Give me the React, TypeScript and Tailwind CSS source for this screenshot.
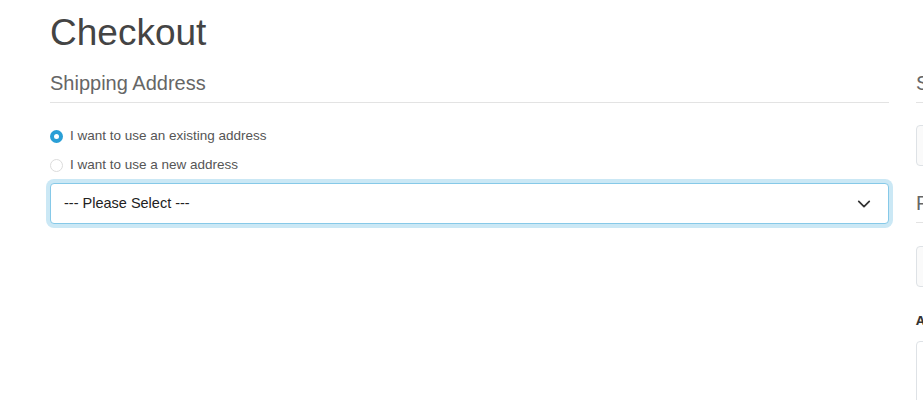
import React from 'react';

const sans = "font-['Liberation_Sans',Arial,sans-serif]";

const Radio: React.FC<{ checked?: boolean; label: string }> = ({ checked, label }) => (
  <label className="flex items-center h-[29px] gap-[7px] text-[13.5px] text-[#555]">
    {checked ? (
      <span className="w-[13px] h-[13px] rounded-full bg-[#2a9fd6] flex items-center justify-center">
        <span className="w-[5px] h-[5px] rounded-full bg-white" />
      </span>
    ) : (
      <span className="w-[13px] h-[13px] rounded-full border border-[#dcdcdc] bg-white" />
    )}
    <span>{label}</span>
  </label>
);

export default function App() {
  return (
    <div className={`w-[923px] h-[400px] overflow-hidden bg-white ${sans}`}>
      <div className="flex pl-[50px] gap-[27px]">
        {/* left column */}
        <div className="w-[839px] shrink-0">
          <h1 className="mt-[12px] text-[37px] leading-[42px] text-[#444]">Checkout</h1>
          <h3 className="mt-[18px] pb-[8px] text-[20px] leading-[22px] text-[#666] border-b border-[#e3e3e3]">
            Shipping Address
          </h3>
          <div className="mt-[19px]">
            <Radio checked label="I want to use an existing address" />
            <Radio label="I want to use a new address" />
          </div>
          <div className="mt-[3px] h-[41px] rounded-[4px] border border-[#86c9e8] ring-4 ring-[#cbe8f5] flex items-center justify-between pl-[13px] pr-[17px] bg-white">
            <span className="text-[14.5px] text-[#222]">--- Please Select ---</span>
            <svg width="14" height="14" viewBox="0 0 16 16" fill="none" stroke="#333" strokeWidth="2" strokeLinecap="round" strokeLinejoin="round">
              <path d="m2 5 6 6 6-6" />
            </svg>
          </div>
        </div>

        {/* right column */}
        <div className="w-[300px] shrink-0">
          <h3 className="mt-[72px] pb-[8px] text-[20px] leading-[22px] text-[#666] border-b border-[#e3e3e3] whitespace-nowrap">
            Shipping Method
          </h3>
          <div className="mt-[22px] h-[41px] rounded-[4px] border border-[#dee2e6] bg-[#fafafa]" />
          <h3 className="mt-[26px] pb-[8px] text-[20px] leading-[22px] text-[#666] border-b border-[#e3e3e3] whitespace-nowrap">
            Payment Method
          </h3>
          <div className="mt-[23px] h-[41px] rounded-[4px] border border-[#dee2e6] bg-[#fafafa]" />
          <p className="mt-[24px] text-[13px] font-bold text-[#333] font-['Open_Sans',sans-serif] whitespace-nowrap">
            Add Comments About Your Order
          </p>
          <div className="mt-[10px] h-[100px] rounded-[4px] border border-[#dee2e6] bg-white" />
        </div>
      </div>
    </div>
  );
}
